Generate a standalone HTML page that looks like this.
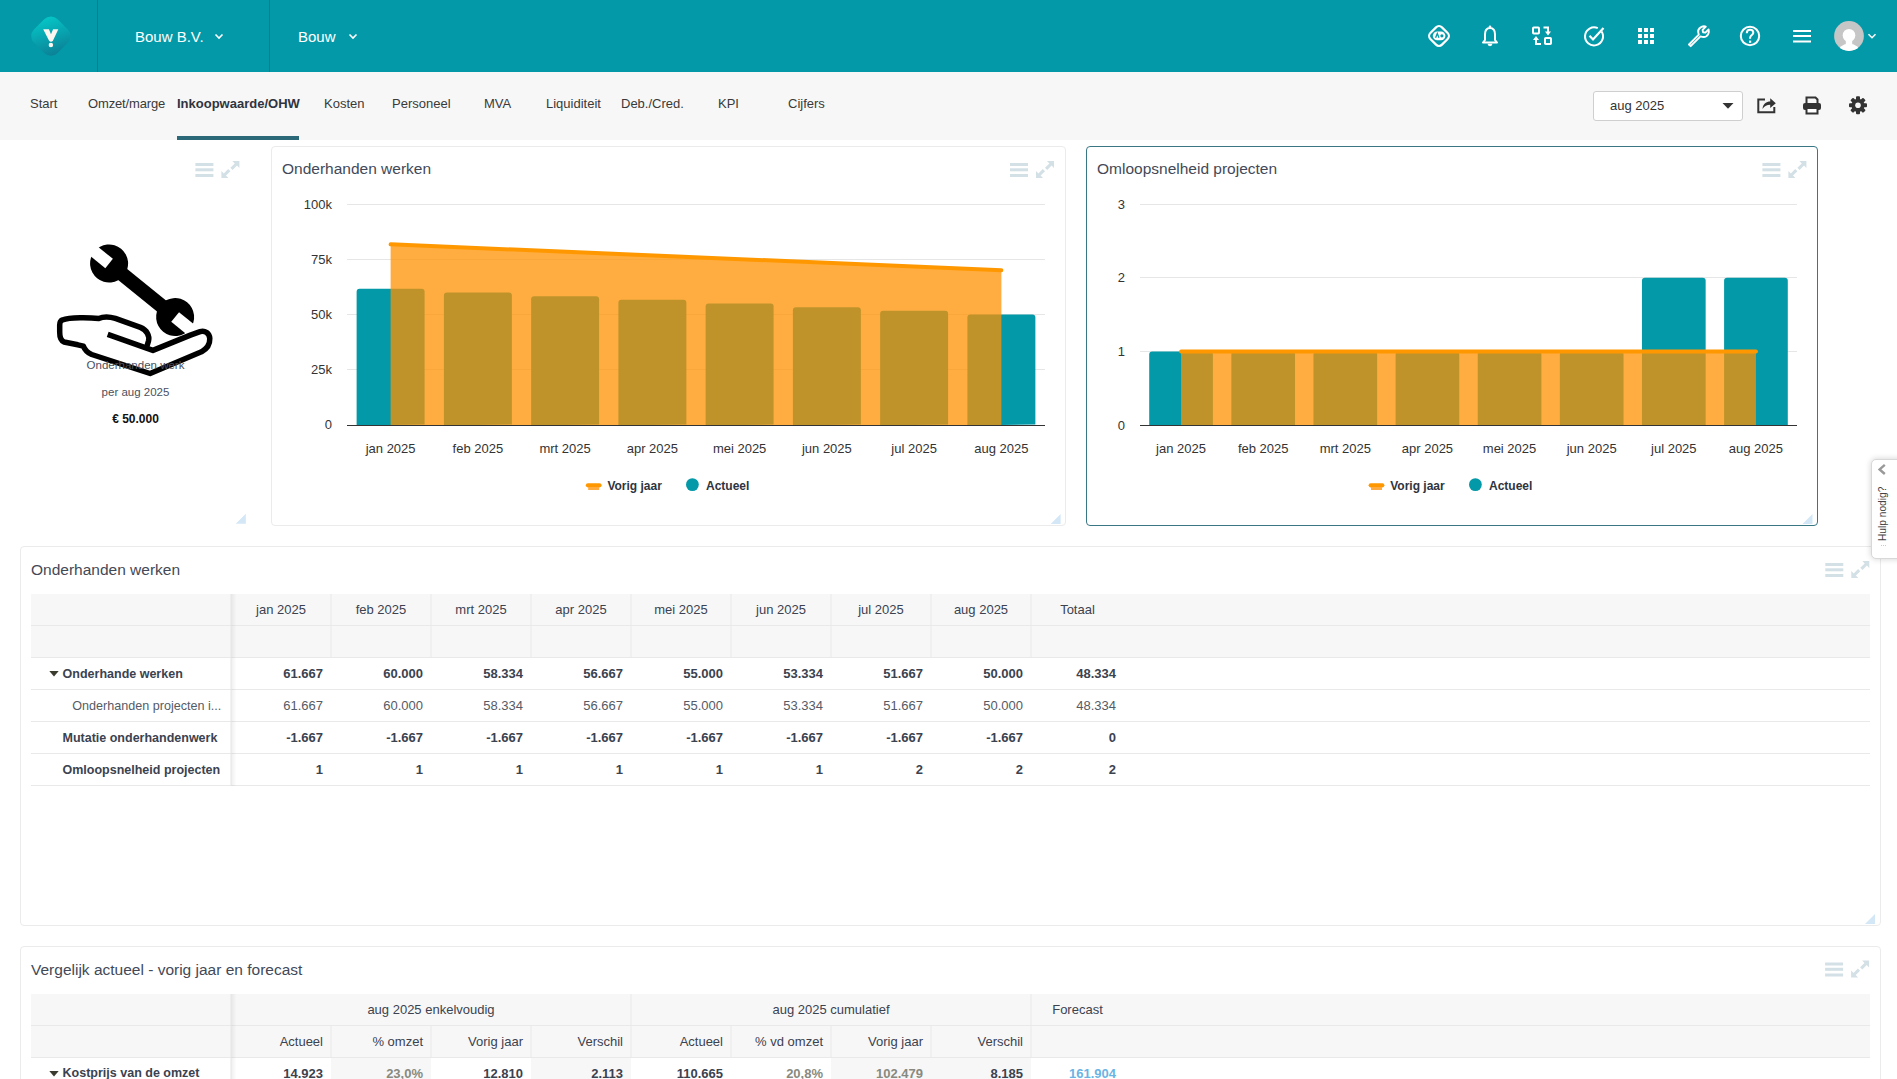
<!DOCTYPE html>
<html><head><meta charset="utf-8">
<style>
*{box-sizing:border-box;margin:0;padding:0}
html,body{width:1897px;height:1079px;overflow:hidden;background:#fff;font-family:"Liberation Sans",sans-serif;color:#3b4250}
.abs{position:absolute;white-space:nowrap}
#hdr{position:absolute;left:0;top:0;width:1897px;height:72px;background:#0499a8}
#tabs{position:absolute;left:0;top:72px;width:1897px;height:68px;background:#f7f7f7}
.tab{font-size:13px;color:#3a3a3a;line-height:15px}
.card{position:absolute;border:1px solid #ebebeb;border-radius:4px;background:#fff}
.ttl{position:absolute;font-size:15.5px;color:#434957;line-height:18px;white-space:nowrap}
svg{position:absolute;overflow:visible}
</style></head><body>
<!-- HEADER -->
<div id="hdr"></div>
<svg style="left:0;top:0" width="1897" height="72" viewBox="0 0 1897 72">
  <defs>
    <linearGradient id="lg" x1="0" y1="0.35" x2="1" y2="0.85">
      <stop offset="0" stop-color="#05c2c4"/><stop offset="1" stop-color="#0b7f95"/>
    </linearGradient>
  </defs>
  <rect x="34.2" y="19.4" width="33.4" height="33.4" rx="9.5" transform="rotate(45 50.9 36.1)" fill="url(#lg)"/>
  <path d="M43.2 29.3 L48.9 29.3 L51 34.3 L53.1 29.3 L58.3 29.3 L52.8 41 Q51 42.6 49.2 41 Z" fill="#fbf7f0"/>
  <circle cx="50.9" cy="45" r="2.25" fill="#fbf7f0"/>
  <rect x="97" y="0" width="1" height="72" fill="#03808d"/>
  <rect x="269" y="0" width="1" height="72" fill="#03808d"/>
  <path d="M215.5 34.5 L219 38 L222.5 34.5" stroke="#fff" stroke-width="1.6" fill="none"/>
  <path d="M349.5 34.5 L353 38 L356.5 34.5" stroke="#fff" stroke-width="1.6" fill="none"/>
  <!-- robot diamond -->
  <g stroke="#fff" fill="none" stroke-width="2.2">
    <rect x="1430.8" y="27.8" width="16.4" height="16.4" rx="4.2" transform="rotate(45 1439 36)"/>
  </g>
  <rect x="1432.8" y="31.4" width="12.6" height="8.8" rx="4.4" fill="#fff"/>
  <path d="M1435.6 37.8 L1437.3 33.6 L1439 37.8" stroke="#0499a8" stroke-width="1.3" fill="none"/>
  <circle cx="1441.9" cy="35.8" r="1.6" fill="#0499a8"/>
  <!-- bell -->
  <path d="M1483 42.5 L1497 42.5 L1495 40 L1495 34.5 C1495 30.5 1493 28 1490 28 C1487 28 1485 30.5 1485 34.5 L1485 40 Z" stroke="#fff" stroke-width="2" fill="none" stroke-linejoin="round"/>
  <circle cx="1490" cy="26.8" r="1.3" fill="#fff"/>
  <path d="M1487.6 43.8 A2.4 2.4 0 0 0 1492.4 43.8 Z" fill="#fff"/>
  <!-- exchange -->
  <g stroke="#fff" stroke-width="2" fill="none">
    <rect x="1533" y="27.5" width="6" height="6" rx="0.8"/>
    <rect x="1545" y="38" width="6" height="6" rx="0.8"/>
    <path d="M1543.5 27.5 L1548 27.5 L1548 33"/>
    <path d="M1541 44 L1536 44 L1536 38.5"/>
  </g>
  <path d="M1545 31.5 L1548 35.5 L1551 31.5 Z" fill="#fff"/>
  <path d="M1533 40 L1536 36 L1539 40 Z" fill="#fff"/>
  <!-- check circle -->
  <path transform="translate(-0.7 0)" d="M1602.3 31.5 A9 9 0 1 1 1598.5 28.2" stroke="#fff" stroke-width="2" fill="none"/>
  <path d="M1589.5 35.8 L1593 39.5 L1603.5 28" stroke="#fff" stroke-width="2.2" fill="none"/>
  <!-- grid -->
  <g fill="#fff">
    <rect x="1638" y="28" width="4" height="4"/><rect x="1644" y="28" width="4" height="4"/><rect x="1650" y="28" width="4" height="4"/>
    <rect x="1638" y="34" width="4" height="4"/><rect x="1644" y="34" width="4" height="4"/><rect x="1650" y="34" width="4" height="4"/>
    <rect x="1638" y="40" width="4" height="4"/><rect x="1644" y="40" width="4" height="4"/><rect x="1650" y="40" width="4" height="4"/>
  </g>
  <!-- wrench -->
  <path transform="translate(0 1)" d="M1689 43.5 L1698.8 33.7 C1697.6 30.5 1698.6 27.3 1701.5 25.9 C1703 25.2 1704.6 25.2 1705.8 25.6 L1702.6 28.8 L1703 31.2 L1705.4 31.6 L1708.6 28.4 C1709 29.8 1709 31.4 1708.3 32.8 C1706.9 35.6 1703.7 36.6 1700.5 35.4 L1690.7 45.2 Z" stroke="#fff" stroke-width="1.9" fill="none" stroke-linejoin="round"/>
  <!-- question -->
  <circle cx="1750" cy="36" r="9.2" stroke="#fff" stroke-width="2" fill="none"/>
  <path d="M1746.8 33.2 C1746.8 30.9 1748.3 29.8 1750.1 29.8 C1752 29.8 1753.3 31 1753.3 32.7 C1753.3 34.9 1750.1 35.3 1750.1 37.8 L1750.1 38.8" stroke="#fff" stroke-width="2" fill="none"/>
  <rect x="1749" y="40.6" width="2.2" height="2.2" fill="#fff"/>
  <!-- hamburger -->
  <g fill="#fff"><rect x="1793" y="30" width="18" height="2"/><rect x="1793" y="35" width="18" height="2"/><rect x="1793" y="40.5" width="18" height="2"/></g>
  <!-- avatar -->
  <clipPath id="av"><circle cx="1849" cy="36" r="14.9"/></clipPath>
  <circle cx="1849" cy="36" r="14.9" fill="#c6c6c6"/>
  <g clip-path="url(#av)" fill="#fff">
    <ellipse cx="1849" cy="35.4" rx="6.3" ry="6.4"/>
    <rect x="1845.8" y="39" width="6.4" height="6"/>
    <ellipse cx="1849" cy="52" rx="11" ry="8.3"/>
  </g>
  <path d="M1868.5 34.2 L1872 37.7 L1875.5 34.2" stroke="#fff" stroke-width="1.5" fill="none"/>
</svg>
<div class="abs" style="left:135px;top:27.7px;font-size:15px;line-height:18px;color:#fff">Bouw B.V.</div>
<div class="abs" style="left:298px;top:27.7px;font-size:15px;line-height:18px;color:#fff">Bouw</div>
<!-- TABS -->
<div id="tabs"></div>
<div class="abs tab" style="left:30px;top:96px">Start</div>
<div class="abs tab" style="left:88px;top:96px;letter-spacing:-0.15px">Omzet/marge</div>
<div class="abs tab" style="left:177px;top:96px;font-weight:bold;color:#2f3440">Inkoopwaarde/OHW</div>
<div class="abs" style="left:177px;top:136px;width:122px;height:4px;background:#2b6878"></div>
<div class="abs tab" style="left:324px;top:96px">Kosten</div>
<div class="abs tab" style="left:392px;top:96px">Personeel</div>
<div class="abs tab" style="left:484px;top:96px">MVA</div>
<div class="abs tab" style="left:546px;top:96px">Liquiditeit</div>
<div class="abs tab" style="left:621px;top:96px">Deb./Cred.</div>
<div class="abs tab" style="left:718px;top:96px">KPI</div>
<div class="abs tab" style="left:788px;top:96px">Cijfers</div>
<div class="abs" style="left:1593px;top:91px;width:150px;height:30px;border:1px solid #cfcfcf;border-radius:3px;background:#fff"></div>
<div class="abs tab" style="left:1610px;top:98px;color:#333">aug 2025</div>
<svg style="left:0;top:72px" width="1897" height="68" viewBox="0 72 1897 68">
  <path d="M1722.5 103 L1733.5 103 L1728 108.8 Z" fill="#333"/>
  <!-- share -->
  <path d="M1765 99.5 L1758.3 99.5 L1758.3 112.3 L1774.3 112.3 L1774.3 107" stroke="#333" stroke-width="2" fill="none"/>
  <path d="M1762.5 109 C1763 103.5 1766.5 101.5 1770.2 101.5 L1770.2 98.3 L1775.8 103.2 L1770.2 108 L1770.2 104.8 C1767 104.8 1764.5 105.8 1762.5 109 Z" fill="#333"/>
  <!-- print -->
  <path d="M1806.5 103 L1806.5 97.5 L1815.5 97.5 L1817.5 99.5 L1817.5 103" stroke="#333" stroke-width="2" fill="none"/>
  <rect x="1803" y="103" width="18" height="7" rx="2" fill="#333"/>
  <rect x="1806.5" y="108" width="11" height="5.5" fill="#fff" stroke="#333" stroke-width="2"/>
  <!-- gear -->
  <g transform="translate(1858 105.3)">
    <g fill="#333">
      <rect x="-2" y="-9" width="4" height="18" rx="1"/>
      <rect x="-2" y="-9" width="4" height="18" rx="1" transform="rotate(45)"/>
      <rect x="-2" y="-9" width="4" height="18" rx="1" transform="rotate(90)"/>
      <rect x="-2" y="-9" width="4" height="18" rx="1" transform="rotate(135)"/>
      <circle r="6.5"/>
    </g>
    <circle r="2.8" fill="#f7f7f7"/>
  </g>
</svg>
<svg style="left:0;top:140px" width="280" height="400" viewBox="0 140 280 400"><g fill="#d3e0e5"><rect x="195.4" y="163" width="18" height="3"/><rect x="195.4" y="168.3" width="18" height="3"/><rect x="195.4" y="174" width="18" height="3"/></g><g fill="#d3e0e5" transform="translate(221.4 161)"><path d="M11 0 L18 0 L18 7 L15.6 4.6 L11.2 9 L9 6.8 L13.4 2.4 Z"/><path d="M0 10 L0 17 L7 17 L4.6 14.6 L9 10.2 L6.8 8 L2.4 12.4 Z"/></g><path d="M245.8 513.8 L245.8 523.8 L235.8 523.8 Z" fill="#d3e7f6"/><g transform="translate(0 0)">
<mask id="wm" maskUnits="userSpaceOnUse" x="0" y="140" width="280" height="400"><rect x="0" y="140" width="280" height="400" fill="#fff"/><g transform="translate(109.1 263.5) rotate(39.03)"><rect x="-30" y="-6" width="30" height="12" fill="#000"/><rect x="85" y="-6.2" width="30" height="12.4" fill="#000"/></g></mask>
<g mask="url(#wm)"><g transform="translate(109.1 263.5) rotate(39.03)" fill="#000"><circle cx="0" cy="0" r="19"/><circle cx="85" cy="0" r="19"/><rect x="0" y="-7.2" width="85" height="14.4"/></g></g>
<path d="M62.3 320 C70 317 90 317.5 98.7 318.6 C103 316.6 109 316.5 115.3 318.4 L140.4 327.4 C147 330 149.8 336 148.5 341 L147.3 345" stroke="#000" stroke-width="5.5" fill="none" stroke-linejoin="round" stroke-linecap="round"/>
<path d="M107.7 334.4 L152.9 350.4 L190.4 335.1 L200.1 331.6 C205 330 209.5 333.5 209.8 338.5 C210 344 206.5 349 201.5 351.8 L150.1 373.5 L91.7 354.5 C87 352.5 84.5 349 83.4 346.2 L77.8 344.8 L64 342 C60.5 340.5 59.7 337 59.7 332.3 L59.7 325 C59.7 322 61 320.5 62.3 320" stroke="#000" stroke-width="5.5" fill="none" stroke-linejoin="round"/>
</g></svg><div class="abs" style="left:0;top:358px;width:271px;text-align:center;font-size:11.5px;color:#4a5060;line-height:14px">Onderhanden werk</div><div class="abs" style="left:0;top:385px;width:271px;text-align:center;font-size:11.5px;color:#4a5060;line-height:14px">per aug 2025</div><div class="abs" style="left:0;top:411.6px;width:271px;text-align:center;font-size:12px;font-weight:bold;color:#111;line-height:14px">€ 50.000</div>
<div class="card" style="left:271px;top:146px;width:795px;height:380px"></div><div class="ttl" style="left:282px;top:160px">Onderhanden werken</div><div class="card" style="left:1086px;top:146px;width:732px;height:380px;border-color:#3a7784"></div><div class="ttl" style="left:1097px;top:160px">Omloopsnelheid projecten</div><svg style="left:0;top:140px" width="1897" height="400" viewBox="0 140 1897 400" font-family="Liberation Sans"><rect x="347" y="369" width="698" height="1" fill="#e6e6e6"/><rect x="347" y="314" width="698" height="1" fill="#e6e6e6"/><rect x="347" y="259" width="698" height="1" fill="#e6e6e6"/><rect x="347" y="204" width="698" height="1" fill="#e6e6e6"/><path d="M356.62 425.5 L356.62 291.83 Q356.62 288.83 359.62 288.83 L421.62 288.83 Q424.62 288.83 424.62 291.83 L424.62 424.5 Z" fill="#0499a8"/><path d="M443.88 425.5 L443.88 295.50 Q443.88 292.50 446.88 292.50 L508.88 292.50 Q511.88 292.50 511.88 295.50 L511.88 424.5 Z" fill="#0499a8"/><path d="M531.12 425.5 L531.12 299.17 Q531.12 296.17 534.12 296.17 L596.12 296.17 Q599.12 296.17 599.12 299.17 L599.12 424.5 Z" fill="#0499a8"/><path d="M618.38 425.5 L618.38 302.83 Q618.38 299.83 621.38 299.83 L683.38 299.83 Q686.38 299.83 686.38 302.83 L686.38 424.5 Z" fill="#0499a8"/><path d="M705.62 425.5 L705.62 306.50 Q705.62 303.50 708.62 303.50 L770.62 303.50 Q773.62 303.50 773.62 306.50 L773.62 424.5 Z" fill="#0499a8"/><path d="M792.88 425.5 L792.88 310.17 Q792.88 307.17 795.88 307.17 L857.88 307.17 Q860.88 307.17 860.88 310.17 L860.88 424.5 Z" fill="#0499a8"/><path d="M880.12 425.5 L880.12 313.83 Q880.12 310.83 883.12 310.83 L945.12 310.83 Q948.12 310.83 948.12 313.83 L948.12 424.5 Z" fill="#0499a8"/><path d="M967.38 425.5 L967.38 317.50 Q967.38 314.50 970.38 314.50 L1032.38 314.50 Q1035.38 314.50 1035.38 317.50 L1035.38 424.5 Z" fill="#0499a8"/><path d="M390.62 425.5 L390.62 244.32 L1001.38 270.28 L1001.38 425.5 Z" fill="#ff9200" fill-opacity="0.75"/><path d="M390.62 244.32 L1001.38 270.28" stroke="#ff9800" stroke-width="4" stroke-linecap="round"/><rect x="347" y="425" width="698" height="1" fill="#333"/><text x="332" y="429.10" text-anchor="end" font-size="13" fill="#333">0</text><text x="332" y="374.10" text-anchor="end" font-size="13" fill="#333">25k</text><text x="332" y="319.10" text-anchor="end" font-size="13" fill="#333">50k</text><text x="332" y="264.10" text-anchor="end" font-size="13" fill="#333">75k</text><text x="332" y="209.10" text-anchor="end" font-size="13" fill="#333">100k</text><text x="390.62" y="453" text-anchor="middle" font-size="13" fill="#333">jan 2025</text><text x="477.88" y="453" text-anchor="middle" font-size="13" fill="#333">feb 2025</text><text x="565.12" y="453" text-anchor="middle" font-size="13" fill="#333">mrt 2025</text><text x="652.38" y="453" text-anchor="middle" font-size="13" fill="#333">apr 2025</text><text x="739.62" y="453" text-anchor="middle" font-size="13" fill="#333">mei 2025</text><text x="826.88" y="453" text-anchor="middle" font-size="13" fill="#333">jun 2025</text><text x="914.12" y="453" text-anchor="middle" font-size="13" fill="#333">jul 2025</text><text x="1001.38" y="453" text-anchor="middle" font-size="13" fill="#333">aug 2025</text><rect x="585.8" y="483.2" width="15.8" height="4.2" rx="2.1" fill="#ff9800"/><rect x="588.1999999999999" y="487" width="11" height="3" fill="#ffab40"/><text x="607.4" y="489.6" font-size="12" font-weight="bold" fill="#2f3440">Vorig jaar</text><circle cx="692.4" cy="484.6" r="6.4" fill="#0499a8"/><text x="706.0" y="489.6" font-size="12" font-weight="bold" fill="#2f3440">Actueel</text><g fill="#d3e0e5"><rect x="1010" y="163" width="18" height="3"/><rect x="1010" y="168.3" width="18" height="3"/><rect x="1010" y="174" width="18" height="3"/></g><g fill="#d3e0e5" transform="translate(1036 161)"><path d="M11 0 L18 0 L18 7 L15.6 4.6 L11.2 9 L9 6.8 L13.4 2.4 Z"/><path d="M0 10 L0 17 L7 17 L4.6 14.6 L9 10.2 L6.8 8 L2.4 12.4 Z"/></g><path d="M1060.6 514 L1060.6 524 L1050.6 524 Z" fill="#d3e7f6"/><rect x="1140" y="351" width="657" height="1" fill="#e6e6e6"/><rect x="1140" y="277" width="657" height="1" fill="#e6e6e6"/><rect x="1140" y="204" width="657" height="1" fill="#e6e6e6"/><path d="M1149.21 425.5 L1149.21 354.40 Q1149.21 351.40 1152.21 351.40 L1209.91 351.40 Q1212.91 351.40 1212.91 354.40 L1212.91 425.0 Z" fill="#0499a8"/><path d="M1231.34 425.5 L1231.34 354.40 Q1231.34 351.40 1234.34 351.40 L1292.04 351.40 Q1295.04 351.40 1295.04 354.40 L1295.04 425.0 Z" fill="#0499a8"/><path d="M1313.46 425.5 L1313.46 354.40 Q1313.46 351.40 1316.46 351.40 L1374.16 351.40 Q1377.16 351.40 1377.16 354.40 L1377.16 425.0 Z" fill="#0499a8"/><path d="M1395.59 425.5 L1395.59 354.40 Q1395.59 351.40 1398.59 351.40 L1456.29 351.40 Q1459.29 351.40 1459.29 354.40 L1459.29 425.0 Z" fill="#0499a8"/><path d="M1477.71 425.5 L1477.71 354.40 Q1477.71 351.40 1480.71 351.40 L1538.41 351.40 Q1541.41 351.40 1541.41 354.40 L1541.41 425.0 Z" fill="#0499a8"/><path d="M1559.84 425.5 L1559.84 354.40 Q1559.84 351.40 1562.84 351.40 L1620.54 351.40 Q1623.54 351.40 1623.54 354.40 L1623.54 425.0 Z" fill="#0499a8"/><path d="M1641.96 425.5 L1641.96 280.80 Q1641.96 277.80 1644.96 277.80 L1702.66 277.80 Q1705.66 277.80 1705.66 280.80 L1705.66 425.0 Z" fill="#0499a8"/><path d="M1724.09 425.5 L1724.09 280.80 Q1724.09 277.80 1727.09 277.80 L1784.79 277.80 Q1787.79 277.80 1787.79 280.80 L1787.79 425.0 Z" fill="#0499a8"/><path d="M1181.06 425.5 L1181.06 351.40 L1755.94 351.40 L1755.94 425.5 Z" fill="#ff9200" fill-opacity="0.75"/><path d="M1181.06 351.40 L1755.94 351.40" stroke="#ff9800" stroke-width="4" stroke-linecap="round"/><rect x="1140" y="425" width="657" height="1" fill="#333"/><text x="1125" y="429.60" text-anchor="end" font-size="13" fill="#333">0</text><text x="1125" y="356.00" text-anchor="end" font-size="13" fill="#333">1</text><text x="1125" y="282.40" text-anchor="end" font-size="13" fill="#333">2</text><text x="1125" y="208.80" text-anchor="end" font-size="13" fill="#333">3</text><text x="1181.06" y="453" text-anchor="middle" font-size="13" fill="#333">jan 2025</text><text x="1263.19" y="453" text-anchor="middle" font-size="13" fill="#333">feb 2025</text><text x="1345.31" y="453" text-anchor="middle" font-size="13" fill="#333">mrt 2025</text><text x="1427.44" y="453" text-anchor="middle" font-size="13" fill="#333">apr 2025</text><text x="1509.56" y="453" text-anchor="middle" font-size="13" fill="#333">mei 2025</text><text x="1591.69" y="453" text-anchor="middle" font-size="13" fill="#333">jun 2025</text><text x="1673.81" y="453" text-anchor="middle" font-size="13" fill="#333">jul 2025</text><text x="1755.94" y="453" text-anchor="middle" font-size="13" fill="#333">aug 2025</text><rect x="1368.6" y="483.2" width="15.8" height="4.2" rx="2.1" fill="#ff9800"/><rect x="1371.0" y="487" width="11" height="3" fill="#ffab40"/><text x="1390.1999999999998" y="489.6" font-size="12" font-weight="bold" fill="#2f3440">Vorig jaar</text><circle cx="1475.4" cy="484.6" r="6.4" fill="#0499a8"/><text x="1489.0" y="489.6" font-size="12" font-weight="bold" fill="#2f3440">Actueel</text><g fill="#d3e0e5"><rect x="1762.4" y="163" width="18" height="3"/><rect x="1762.4" y="168.3" width="18" height="3"/><rect x="1762.4" y="174" width="18" height="3"/></g><g fill="#d3e0e5" transform="translate(1788.4 161)"><path d="M11 0 L18 0 L18 7 L15.6 4.6 L11.2 9 L9 6.8 L13.4 2.4 Z"/><path d="M0 10 L0 17 L7 17 L4.6 14.6 L9 10.2 L6.8 8 L2.4 12.4 Z"/></g><path d="M1812.5 514 L1812.5 524 L1802.5 524 Z" fill="#d3e7f6"/></svg><div class="card" style="left:20px;top:546px;width:1861px;height:380px"></div>
<div class="ttl" style="left:31px;top:561px">Onderhanden werken</div>
<svg style="left:0;top:540px" width="1897" height="400" viewBox="0 540 1897 400"><rect x="31" y="594" width="1839" height="63.5" fill="#f7f7f7"/><rect x="31" y="625" width="1839" height="1" fill="#e9e9e9"/><rect x="31" y="657" width="1839" height="1" fill="#e9e9e9"/><rect x="31" y="689" width="1839" height="1" fill="#e9e9e9"/><rect x="31" y="721" width="1839" height="1" fill="#e9e9e9"/><rect x="31" y="753" width="1839" height="1" fill="#e9e9e9"/><rect x="31" y="785" width="1839" height="1" fill="#e9e9e9"/><rect x="330.5" y="594" width="1" height="63.5" fill="#e9e9e9"/><rect x="430.5" y="594" width="1" height="63.5" fill="#e9e9e9"/><rect x="530.5" y="594" width="1" height="63.5" fill="#e9e9e9"/><rect x="630.5" y="594" width="1" height="63.5" fill="#e9e9e9"/><rect x="730.5" y="594" width="1" height="63.5" fill="#e9e9e9"/><rect x="830.5" y="594" width="1" height="63.5" fill="#e9e9e9"/><rect x="930.5" y="594" width="1" height="63.5" fill="#e9e9e9"/><rect x="1030.5" y="594" width="1" height="63.5" fill="#e9e9e9"/><defs><linearGradient id="sh" x1="0" x2="1"><stop offset="0" stop-color="#000" stop-opacity="0.06"/><stop offset="1" stop-color="#000" stop-opacity="0"/></linearGradient></defs><rect x="230.5" y="594" width="1" height="192" fill="#e6e6e6"/><rect x="231.5" y="594" width="5" height="192" fill="url(#sh)"/><g fill="#d3e0e5"><rect x="1825.3" y="563" width="18" height="3"/><rect x="1825.3" y="568.3" width="18" height="3"/><rect x="1825.3" y="574" width="18" height="3"/></g><g fill="#d3e0e5" transform="translate(1851.3 561)"><path d="M11 0 L18 0 L18 7 L15.6 4.6 L11.2 9 L9 6.8 L13.4 2.4 Z"/><path d="M0 10 L0 17 L7 17 L4.6 14.6 L9 10.2 L6.8 8 L2.4 12.4 Z"/></g><path d="M1875 914 L1875 924 L1865 924 Z" fill="#d3e7f6"/><path d="M49.3 671 L58.7 671 L54 676.4 Z" fill="#3b3b30"/></svg>
<div class="abs" style="left:131px;width:300px;text-align:center;top:602px;font-size:13px;line-height:15px;color:#3b4250">jan 2025</div>
<div class="abs" style="left:231px;width:300px;text-align:center;top:602px;font-size:13px;line-height:15px;color:#3b4250">feb 2025</div>
<div class="abs" style="left:331px;width:300px;text-align:center;top:602px;font-size:13px;line-height:15px;color:#3b4250">mrt 2025</div>
<div class="abs" style="left:431px;width:300px;text-align:center;top:602px;font-size:13px;line-height:15px;color:#3b4250">apr 2025</div>
<div class="abs" style="left:531px;width:300px;text-align:center;top:602px;font-size:13px;line-height:15px;color:#3b4250">mei 2025</div>
<div class="abs" style="left:631px;width:300px;text-align:center;top:602px;font-size:13px;line-height:15px;color:#3b4250">jun 2025</div>
<div class="abs" style="left:731px;width:300px;text-align:center;top:602px;font-size:13px;line-height:15px;color:#3b4250">jul 2025</div>
<div class="abs" style="left:831px;width:300px;text-align:center;top:602px;font-size:13px;line-height:15px;color:#3b4250">aug 2025</div>
<div class="abs" style="left:927.5px;width:300px;text-align:center;top:602px;font-size:13px;line-height:15px;color:#3b4250">Totaal</div>
<div class="abs" style="left:62.6px;top:666.7px;font-size:12.5px;line-height:15px;font-weight:bold;color:#3b4250">Onderhande werken</div>
<div class="abs" style="left:23px;width:300px;text-align:right;top:666px;font-size:13px;line-height:15px;font-weight:bold;color:#3b4250">61.667</div>
<div class="abs" style="left:123px;width:300px;text-align:right;top:666px;font-size:13px;line-height:15px;font-weight:bold;color:#3b4250">60.000</div>
<div class="abs" style="left:223px;width:300px;text-align:right;top:666px;font-size:13px;line-height:15px;font-weight:bold;color:#3b4250">58.334</div>
<div class="abs" style="left:323px;width:300px;text-align:right;top:666px;font-size:13px;line-height:15px;font-weight:bold;color:#3b4250">56.667</div>
<div class="abs" style="left:423px;width:300px;text-align:right;top:666px;font-size:13px;line-height:15px;font-weight:bold;color:#3b4250">55.000</div>
<div class="abs" style="left:523px;width:300px;text-align:right;top:666px;font-size:13px;line-height:15px;font-weight:bold;color:#3b4250">53.334</div>
<div class="abs" style="left:623px;width:300px;text-align:right;top:666px;font-size:13px;line-height:15px;font-weight:bold;color:#3b4250">51.667</div>
<div class="abs" style="left:723px;width:300px;text-align:right;top:666px;font-size:13px;line-height:15px;font-weight:bold;color:#3b4250">50.000</div>
<div class="abs" style="left:816px;width:300px;text-align:right;top:666px;font-size:13px;line-height:15px;font-weight:bold;color:#3b4250">48.334</div>
<div class="abs" style="left:72.2px;top:698.7px;font-size:12.6px;line-height:15px;font-weight:normal;color:#555b66">Onderhanden projecten i...</div>
<div class="abs" style="left:23px;width:300px;text-align:right;top:698px;font-size:13px;line-height:15px;font-weight:normal;color:#555b66">61.667</div>
<div class="abs" style="left:123px;width:300px;text-align:right;top:698px;font-size:13px;line-height:15px;font-weight:normal;color:#555b66">60.000</div>
<div class="abs" style="left:223px;width:300px;text-align:right;top:698px;font-size:13px;line-height:15px;font-weight:normal;color:#555b66">58.334</div>
<div class="abs" style="left:323px;width:300px;text-align:right;top:698px;font-size:13px;line-height:15px;font-weight:normal;color:#555b66">56.667</div>
<div class="abs" style="left:423px;width:300px;text-align:right;top:698px;font-size:13px;line-height:15px;font-weight:normal;color:#555b66">55.000</div>
<div class="abs" style="left:523px;width:300px;text-align:right;top:698px;font-size:13px;line-height:15px;font-weight:normal;color:#555b66">53.334</div>
<div class="abs" style="left:623px;width:300px;text-align:right;top:698px;font-size:13px;line-height:15px;font-weight:normal;color:#555b66">51.667</div>
<div class="abs" style="left:723px;width:300px;text-align:right;top:698px;font-size:13px;line-height:15px;font-weight:normal;color:#555b66">50.000</div>
<div class="abs" style="left:816px;width:300px;text-align:right;top:698px;font-size:13px;line-height:15px;font-weight:normal;color:#555b66">48.334</div>
<div class="abs" style="left:62.5px;top:730.7px;font-size:12.5px;line-height:15px;font-weight:bold;color:#3b4250">Mutatie onderhandenwerk</div>
<div class="abs" style="left:23px;width:300px;text-align:right;top:730px;font-size:13px;line-height:15px;font-weight:bold;color:#3b4250">-1.667</div>
<div class="abs" style="left:123px;width:300px;text-align:right;top:730px;font-size:13px;line-height:15px;font-weight:bold;color:#3b4250">-1.667</div>
<div class="abs" style="left:223px;width:300px;text-align:right;top:730px;font-size:13px;line-height:15px;font-weight:bold;color:#3b4250">-1.667</div>
<div class="abs" style="left:323px;width:300px;text-align:right;top:730px;font-size:13px;line-height:15px;font-weight:bold;color:#3b4250">-1.667</div>
<div class="abs" style="left:423px;width:300px;text-align:right;top:730px;font-size:13px;line-height:15px;font-weight:bold;color:#3b4250">-1.667</div>
<div class="abs" style="left:523px;width:300px;text-align:right;top:730px;font-size:13px;line-height:15px;font-weight:bold;color:#3b4250">-1.667</div>
<div class="abs" style="left:623px;width:300px;text-align:right;top:730px;font-size:13px;line-height:15px;font-weight:bold;color:#3b4250">-1.667</div>
<div class="abs" style="left:723px;width:300px;text-align:right;top:730px;font-size:13px;line-height:15px;font-weight:bold;color:#3b4250">-1.667</div>
<div class="abs" style="left:816px;width:300px;text-align:right;top:730px;font-size:13px;line-height:15px;font-weight:bold;color:#3b4250">0</div>
<div class="abs" style="left:62.5px;top:762.7px;font-size:12.5px;line-height:15px;font-weight:bold;color:#3b4250">Omloopsnelheid projecten</div>
<div class="abs" style="left:23px;width:300px;text-align:right;top:762px;font-size:13px;line-height:15px;font-weight:bold;color:#3b4250">1</div>
<div class="abs" style="left:123px;width:300px;text-align:right;top:762px;font-size:13px;line-height:15px;font-weight:bold;color:#3b4250">1</div>
<div class="abs" style="left:223px;width:300px;text-align:right;top:762px;font-size:13px;line-height:15px;font-weight:bold;color:#3b4250">1</div>
<div class="abs" style="left:323px;width:300px;text-align:right;top:762px;font-size:13px;line-height:15px;font-weight:bold;color:#3b4250">1</div>
<div class="abs" style="left:423px;width:300px;text-align:right;top:762px;font-size:13px;line-height:15px;font-weight:bold;color:#3b4250">1</div>
<div class="abs" style="left:523px;width:300px;text-align:right;top:762px;font-size:13px;line-height:15px;font-weight:bold;color:#3b4250">1</div>
<div class="abs" style="left:623px;width:300px;text-align:right;top:762px;font-size:13px;line-height:15px;font-weight:bold;color:#3b4250">2</div>
<div class="abs" style="left:723px;width:300px;text-align:right;top:762px;font-size:13px;line-height:15px;font-weight:bold;color:#3b4250">2</div>
<div class="abs" style="left:816px;width:300px;text-align:right;top:762px;font-size:13px;line-height:15px;font-weight:bold;color:#3b4250">2</div>
<div class="card" style="left:20px;top:946px;width:1861px;height:200px"></div>
<div class="ttl" style="left:31px;top:961px">Vergelijk actueel - vorig jaar en forecast</div>
<svg style="left:0;top:940px" width="1897" height="139" viewBox="0 940 1897 139"><rect x="31" y="994" width="1839" height="63.5" fill="#f7f7f7"/><rect x="31" y="1025" width="1839" height="1" fill="#e9e9e9"/><rect x="31" y="1057" width="1839" height="1" fill="#e9e9e9"/><rect x="630.5" y="994" width="1" height="31" fill="#e9e9e9"/><rect x="1030.5" y="994" width="1" height="31" fill="#e9e9e9"/><rect x="330.5" y="1025.5" width="1" height="32" fill="#e9e9e9"/><rect x="430.5" y="1025.5" width="1" height="32" fill="#e9e9e9"/><rect x="530.5" y="1025.5" width="1" height="32" fill="#e9e9e9"/><rect x="630.5" y="1025.5" width="1" height="32" fill="#e9e9e9"/><rect x="730.5" y="1025.5" width="1" height="32" fill="#e9e9e9"/><rect x="830.5" y="1025.5" width="1" height="32" fill="#e9e9e9"/><rect x="930.5" y="1025.5" width="1" height="32" fill="#e9e9e9"/><rect x="1030.5" y="1025.5" width="1" height="32" fill="#e9e9e9"/><rect x="331" y="1058" width="100" height="30" fill="#f7f7f7"/><rect x="531" y="1058" width="100" height="30" fill="#f7f7f7"/><rect x="831" y="1058" width="200" height="30" fill="#f7f7f7"/><rect x="230.5" y="994" width="1" height="100" fill="#e6e6e6"/><rect x="231.5" y="994" width="5" height="100" fill="url(#sh)"/><g fill="#d3e0e5"><rect x="1825.1" y="962.5" width="18" height="3"/><rect x="1825.1" y="967.8" width="18" height="3"/><rect x="1825.1" y="973.5" width="18" height="3"/></g><g fill="#d3e0e5" transform="translate(1851.1 960.5)"><path d="M11 0 L18 0 L18 7 L15.6 4.6 L11.2 9 L9 6.8 L13.4 2.4 Z"/><path d="M0 10 L0 17 L7 17 L4.6 14.6 L9 10.2 L6.8 8 L2.4 12.4 Z"/></g><path d="M49.3 1071 L58.7 1071 L54 1076.4 Z" fill="#3b3b30"/></svg>
<div class="abs" style="left:281px;width:300px;text-align:center;top:1002px;font-size:13px;line-height:15px;color:#3b4250">aug 2025 enkelvoudig</div>
<div class="abs" style="left:681px;width:300px;text-align:center;top:1002px;font-size:13px;line-height:15px;color:#3b4250">aug 2025 cumulatief</div>
<div class="abs" style="left:927.5px;width:300px;text-align:center;top:1002px;font-size:13px;line-height:15px;color:#3b4250">Forecast</div>
<div class="abs" style="left:23px;width:300px;text-align:right;top:1034px;font-size:13px;line-height:15px;color:#3b4250">Actueel</div>
<div class="abs" style="left:123px;width:300px;text-align:right;top:1034px;font-size:13px;line-height:15px;color:#3b4250">% omzet</div>
<div class="abs" style="left:223px;width:300px;text-align:right;top:1034px;font-size:13px;line-height:15px;color:#3b4250">Vorig jaar</div>
<div class="abs" style="left:323px;width:300px;text-align:right;top:1034px;font-size:13px;line-height:15px;color:#3b4250">Verschil</div>
<div class="abs" style="left:423px;width:300px;text-align:right;top:1034px;font-size:13px;line-height:15px;color:#3b4250">Actueel</div>
<div class="abs" style="left:523px;width:300px;text-align:right;top:1034px;font-size:13px;line-height:15px;color:#3b4250">% vd omzet</div>
<div class="abs" style="left:623px;width:300px;text-align:right;top:1034px;font-size:13px;line-height:15px;color:#3b4250">Vorig jaar</div>
<div class="abs" style="left:723px;width:300px;text-align:right;top:1034px;font-size:13px;line-height:15px;color:#3b4250">Verschil</div>
<div class="abs" style="left:62.6px;top:1066px;font-size:12.5px;line-height:15px;font-weight:bold;color:#3b4250">Kostprijs van de omzet</div>
<div class="abs" style="left:23px;width:300px;text-align:right;top:1066px;font-size:13px;line-height:15px;font-weight:bold;color:#3b4250">14.923</div>
<div class="abs" style="left:123px;width:300px;text-align:right;top:1066px;font-size:13px;line-height:15px;font-weight:bold;color:#888a80">23,0%</div>
<div class="abs" style="left:223px;width:300px;text-align:right;top:1066px;font-size:13px;line-height:15px;font-weight:bold;color:#3b4250">12.810</div>
<div class="abs" style="left:323px;width:300px;text-align:right;top:1066px;font-size:13px;line-height:15px;font-weight:bold;color:#3b4250">2.113</div>
<div class="abs" style="left:423px;width:300px;text-align:right;top:1066px;font-size:13px;line-height:15px;font-weight:bold;color:#3b4250">110.665</div>
<div class="abs" style="left:523px;width:300px;text-align:right;top:1066px;font-size:13px;line-height:15px;font-weight:bold;color:#888a80">20,8%</div>
<div class="abs" style="left:623px;width:300px;text-align:right;top:1066px;font-size:13px;line-height:15px;font-weight:bold;color:#888a80">102.479</div>
<div class="abs" style="left:723px;width:300px;text-align:right;top:1066px;font-size:13px;line-height:15px;font-weight:bold;color:#3b4250">8.185</div>
<div class="abs" style="left:816px;width:300px;text-align:right;top:1066px;font-size:13px;line-height:15px;font-weight:bold;color:#6ab4e4">161.904</div>
<div class="abs" style="left:1871px;top:458.5px;width:40px;height:100px;background:#fff;border:1px solid #d8d8d8;border-radius:5px;box-shadow:0 0 6px rgba(0,0,0,0.18)"></div>
<svg style="left:1871px;top:458px" width="26" height="100" viewBox="1871 458 26 100"><path d="M1884.8 464.8 L1879.6 469.4 L1884.8 474" stroke="#999" stroke-width="2.4" fill="none"/><text transform="translate(1886.3 541) rotate(-90)" font-size="10.2" fill="#444">Hulp nodig?</text><path d="M1881 545.5 h1 M1883 545.5 h1 M1885 545.5 h1" stroke="#bbb" stroke-width="0.8"/></svg></body></html>
